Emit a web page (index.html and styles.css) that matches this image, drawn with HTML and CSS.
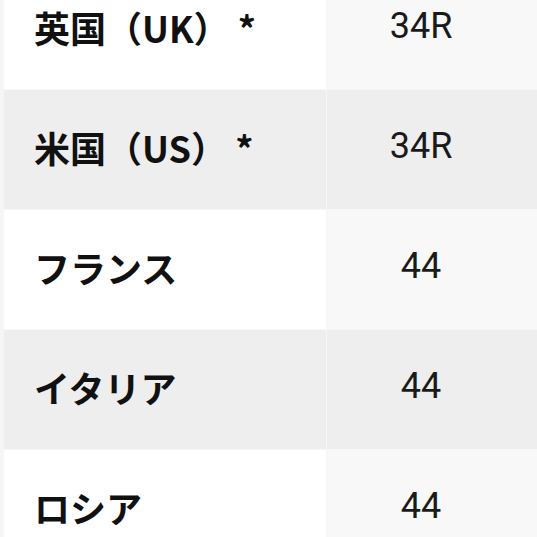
FILE: index.html
```html
<!DOCTYPE html>
<html lang="ja">
<head>
<meta charset="utf-8">
<link rel="stylesheet" href="styles.css">
</head>
<body>
<div class="wrap">
  <table class="size-table">
    <tr class="odd"><th>英国（UK） *</th><td>34R</td></tr>
    <tr class="even"><th>米国（US） *</th><td>34R</td></tr>
    <tr class="odd"><th>フランス</th><td>44</td></tr>
    <tr class="even"><th>イタリア</th><td>44</td></tr>
    <tr class="odd"><th>ロシア</th><td>44</td></tr>
  </table>
</div>
</body>
</html>
```

FILE: styles.css
```css
html, body {
  margin: 0;
  padding: 0;
  background: #ffffff;
  overflow: hidden;
}
.wrap {
  margin-top: -31px;
  border-left: 4px solid #f6f6f6;
  width: 556px;
}
.size-table {
  border-collapse: collapse;
  width: 100%;
  table-layout: fixed;
}
.size-table tr {
  height: 120px;
}
.size-table th {
  width: 292px;
  text-align: left;
  padding: 0 0 4px 30px;
  font-family: "Noto Sans CJK JP", "Noto Sans", sans-serif;
  font-weight: 700;
  font-size: 36px;
  color: #111111;
  white-space: pre;
  border-right: 1px solid #f7f7f7;
  border-bottom: 1px solid #f7f7f7;
}
.size-table td {
  text-align: center;
  padding: 0 45px 6px 0;
  font-family: "Roboto", "Noto Sans", sans-serif;
  font-weight: 400;
  font-size: 36px;
  color: #1a1a1a;
  border-bottom: 1px solid #f7f7f7;
}
.size-table .odd th { background: #ffffff; }
.size-table .odd td { background: #f8f8f8; }
.size-table .even th { background: #eeeeee; }
.size-table .even td { background: #eeeeee; }
```
